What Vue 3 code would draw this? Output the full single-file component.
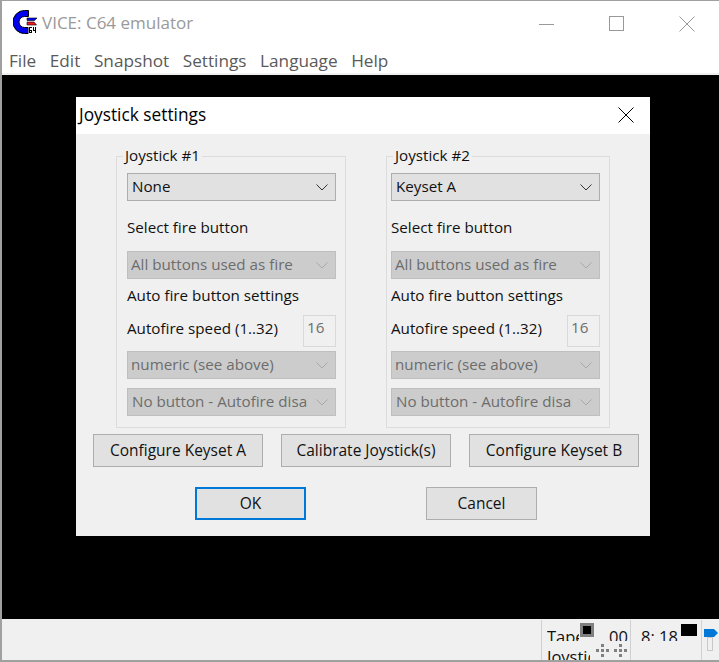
<script setup>
const menus = ['File', 'Edit', 'Snapshot', 'Settings', 'Language', 'Help']
const groups = [
  { id: 'one', title: 'Joystick #1', device: 'None' },
  { id: 'two', title: 'Joystick #2', device: 'Keyset A' }
]
</script>

<template>
  <div class="window">
    <header class="titlebar">
      <svg class="logo" viewBox="0 0 25 25" width="25" height="25">
        <path d="M11.5 .5 A11.5 11.5 0 1 0 11.5 23.5 L15.5 23.5 L15.5 17.5 L11.5 17.5 A5.5 5.5 0 1 1 11.5 6.5 L15.5 6.5 L15.5 .5 Z" fill="#0000f0" stroke="#000" stroke-width="1"/>
        <path d="M14 8 H24 L21.5 10.5 H14 Z" fill="#0000f0" stroke="#000" stroke-width=".6"/>
        <path d="M14 12 H21 L23.5 15 H14 Z" fill="#ee1c24" stroke="#000" stroke-width=".6"/>
        <rect x="15.5" y="16" width="9" height="9" fill="#fff"/>
        <path d="M16 17h3v1h-2v2h2v3h-3zM17 21v1h1v-1zM20 17h1v3h1v-3h1v6h-1v-2h-2z" fill="#000"/>
      </svg>
      <span class="app-title">VICE: C64 emulator</span>
      <div class="caption">
        <svg viewBox="0 0 16 16" width="16" height="16"><path d="M0 8.5H15" stroke="#999" fill="none"/></svg>
        <svg viewBox="0 0 16 16" width="16" height="16"><rect x=".5" y=".5" width="14" height="14" stroke="#999" fill="none"/></svg>
        <svg viewBox="0 0 16 16" width="16" height="16"><path d="M.5 .5L15.5 15.5M15.5 .5L.5 15.5" stroke="#999" fill="none"/></svg>
      </div>
    </header>
    <nav class="menubar">
      <span v-for="m in menus" :key="m" class="menu">{{ m }}</span>
    </nav>
    <main class="screen">
      <section class="dialog">
        <div class="dialog-title">
          <span>Joystick settings</span>
          <svg viewBox="0 0 16 16" width="16" height="16"><path d="M.5 .5L15.5 15.5M15.5 .5L.5 15.5" stroke="#000" fill="none"/></svg>
        </div>
        <div class="dialog-body">
          <div class="groups">
            <fieldset v-for="g in groups" :key="g.id" class="group" :class="g.id">
              <legend>{{ g.title }}</legend>
              <div class="combo first"><span class="combo-text">{{ g.device }}</span><svg class="chev" viewBox="0 0 12 7" width="12" height="7"><path d="M.5 .5L6 6L11.5 .5" fill="none" stroke="#333"/></svg></div>
              <div class="label fire">Select fire button</div>
              <div class="combo off"><span class="combo-text">All buttons used as fire</span><svg class="chev" viewBox="0 0 12 7" width="12" height="7"><path d="M.5 .5L6 6L11.5 .5" fill="none" stroke="#a8a8a8"/></svg></div>
              <div class="label auto">Auto fire button settings</div>
              <div class="speed">
                <span class="label speed-label">Autofire speed (1..32)</span>
                <span class="num">16</span>
              </div>
              <div class="combo off"><span class="combo-text">numeric (see above)</span><svg class="chev" viewBox="0 0 12 7" width="12" height="7"><path d="M.5 .5L6 6L11.5 .5" fill="none" stroke="#a8a8a8"/></svg></div>
              <div class="combo off last"><span class="combo-text clip">No button - Autofire disabled</span><svg class="chev" viewBox="0 0 12 7" width="12" height="7"><path d="M.5 .5L6 6L11.5 .5" fill="none" stroke="#a8a8a8"/></svg></div>
            </fieldset>
          </div>
          <div class="btn-row">
            <button class="btn wide">Configure Keyset A</button>
            <button class="btn wide">Calibrate Joystick(s)</button>
            <button class="btn wide">Configure Keyset B</button>
          </div>
          <div class="btn-row2">
            <button class="btn action focus">OK</button>
            <button class="btn action">Cancel</button>
          </div>
        </div>
      </section>
    </main>
    <footer class="status">
      <div class="cell tape">
        <span class="line l1">Tape</span>
        <span class="line l2">Joystick</span>
        <span class="line counter">00</span>
        <span class="led"></span>
        <svg class="dots d1" viewBox="0 0 13 13" width="13" height="13"><path d="M5 0h3v3H5zM0 5h3v3H0zM10 5h3v3h-3zM5 10h3v3H5zM5 5h3v3H5z" fill="#808080"/></svg>
        <svg class="dots d2" viewBox="0 0 13 13" width="13" height="13"><path d="M5 0h3v3H5zM0 5h3v3H0zM10 5h3v3h-3zM5 10h3v3H5zM5 5h3v3H5z" fill="#808080"/></svg>
      </div>
      <div class="cell clock">
        <span class="line time">8: 18</span>
        <span class="block"></span>
      </div>
      <div class="cell vol">
        <svg class="arrow" viewBox="0 0 14 8" width="14" height="8"><path d="M0 0H10L14 4L10 8H0Z" fill="#0078d7"/></svg>
        <span class="track"></span>
      </div>
    </footer>
  </div>
</template>

<style scoped>
.window {
  width: 719px;
  height: 662px;
  box-sizing: border-box;
  display: flex;
  flex-direction: column;
  background: #fff;
  border-top: 1px solid #a0a0a0;
  border-left: 2px solid #a0a0a0;
  font-family: "Open Sans", "Noto Sans", sans-serif;
  overflow: hidden;
}
.titlebar {
  height: 49px;
  flex: none;
  box-sizing: border-box;
  display: flex;
  align-items: center;
  padding: 0 0 6px 11px;
}
.app-title {
  margin-left: 4px;
  font-size: 17px;
  color: #999;
}
.caption {
  margin-left: auto;
  display: flex;
  gap: 54px;
  padding-right: 24px;
  margin-top: 2px;
}
.menubar {
  height: 25px;
  flex: none;
  box-sizing: border-box;
  display: flex;
  gap: 13.6px;
  padding: 0 0 2px 7px;
  align-items: center;
  font-size: 17.2px;
  color: #5a5a5a;
  border-bottom: 2px solid #f0f0f0;
}
.screen {
  flex: 1;
  position: relative;
  background: #000;
}
.dialog {
  position: absolute;
  left: 74px;
  top: 22px;
  width: 574px;
  height: 439px;
  display: flex;
  flex-direction: column;
  background: #f0f0f0;
}
.dialog-title {
  height: 37px;
  flex: none;
  box-sizing: border-box;
  background: #fff;
  display: flex;
  align-items: center;
  justify-content: space-between;
  padding: 0 16px 2px 3px;
  font-size: 17.3px;
  color: #000;
}
.dialog-body {
  flex: 1;
  font-size: 15.2px;
  color: #111;
}
.groups {
  display: flex;
  gap: 40px;
  padding: 12px 0 0 40px;
}
.group {
  margin: 0;
  box-sizing: border-box;
  height: 282px;
  border: 1px solid #dcdcdc;
  display: flex;
  flex-direction: column;
}
.group.one {
  width: 230px;
  padding: 0 9px 0 10px;
}
.group.two {
  width: 224px;
  padding: 0 9px 0 4px;
}
legend {
  padding: 0 2px 2px;
  font-size: 15.2px;
  line-height: 18px;
}
.one legend {
  margin-left: -4px;
}
.two legend {
  margin-left: 2px;
}
.combo {
  box-sizing: border-box;
  width: 209px;
  height: 28px;
  flex: none;
  margin-top: 6px;
  background: #e1e1e1;
  border: 1px solid #adadad;
  display: flex;
  align-items: center;
  justify-content: space-between;
  padding: 0 7px 2px 4px;
}
.combo.first {
  margin-top: 7px;
}
.combo.off {
  background: #ccc;
  border-color: #bfbfbf;
  color: #6d6d6d;
  padding-left: 3px;
}
.combo.last {
  margin-top: 9px;
}
.combo-text {
  white-space: nowrap;
  overflow: hidden;
}
.clip {
  width: 176px;
  padding-left: 1px;
  flex: none;
}
.chev {
  flex: none;
  margin-top: 2px;
}
.label {
  line-height: 20px;
}
.fire {
  margin-top: 16px;
  margin-bottom: 8px;
}
.auto {
  margin-top: 6px;
}
.speed {
  display: flex;
  align-items: center;
  justify-content: space-between;
  width: 209px;
  height: 32px;
  margin-top: 10px;
  margin-bottom: -2px;
}
.speed-label {
  margin-top: -6px;
}
.num {
  box-sizing: border-box;
  width: 33px;
  height: 32px;
  border: 1px solid #d9d9d9;
  color: #6d6d6d;
  padding: 1px 0 0 3px;
  line-height: 20px;
}
.btn {
  box-sizing: border-box;
  height: 33px;
  padding: 0 0 2px;
  background: #e1e1e1;
  border: 1px solid #adadad;
  font: inherit;
  font-size: 15.5px;
  color: #111;
}
.btn-row {
  display: flex;
  gap: 18px;
  margin: 6px 0 0 17px;
}
.wide {
  width: 170px;
}
.btn-row2 {
  display: flex;
  gap: 120px;
  margin: 20px 0 0 119px;
}
.action {
  width: 111px;
}
.focus {
  border: 2px solid #0078d7;
}
.status {
  height: 43px;
  flex: none;
  box-sizing: border-box;
  background: #f0f0f0;
  display: flex;
  justify-content: flex-end;
  border-bottom: 2px solid #a0a0a0;
  font-size: 16.5px;
  color: #111;
}
.cell {
  position: relative;
  box-sizing: border-box;
  height: 40px;
  margin-top: 1px;
  border-left: 1px solid #d0d0d0;
  overflow: hidden;
}
.tape {
  width: 89px;
}
.clock {
  width: 71px;
}
.vol {
  width: 18px;
}
.line {
  position: absolute;
  height: 14px;
  line-height: 20px;
  white-space: nowrap;
  overflow: hidden;
}
.l1 {
  left: 5px;
  top: 7px;
  width: 32px;
}
.l2 {
  left: 5px;
  top: 27px;
  width: 43px;
  height: 20px;
}
.counter {
  left: 67px;
  top: 7px;
}
.led {
  position: absolute;
  left: 38px;
  top: 3px;
  width: 14px;
  height: 14px;
  box-sizing: border-box;
  background: #000;
  border: 3px solid #808080;
}
.dots {
  position: absolute;
  top: 24px;
}
.d1 {
  left: 54px;
}
.d2 {
  left: 72px;
}
.time {
  left: 10px;
  top: 7px;
}
.block {
  position: absolute;
  left: 50px;
  top: 4px;
  width: 16px;
  height: 12px;
  background: #000;
}
.arrow {
  position: absolute;
  left: 2px;
  top: 9px;
}
.track {
  position: absolute;
  left: 5px;
  top: 17px;
  width: 6px;
  height: 14px;
  box-sizing: border-box;
  border: 1px solid #c8c8c8;
}
</style>
